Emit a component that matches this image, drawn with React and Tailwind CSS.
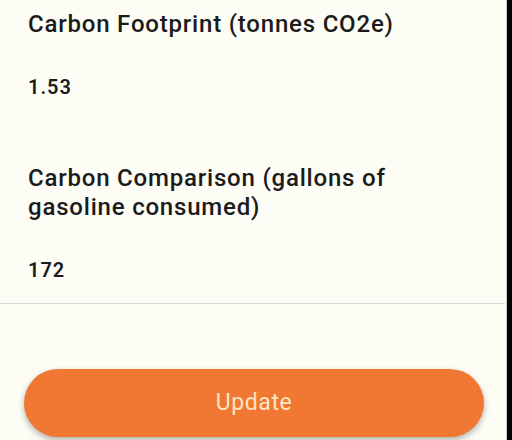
export default function App() {
  return (
    <div className="w-[512px] h-[440px] flex bg-black overflow-hidden" style={{ fontFamily: "Roboto, 'Noto Sans', sans-serif" }}>
      <div className="w-[507px] h-full bg-[#fdfcf5] border-r border-[#cfcfca] flex flex-col">
        <div className="pl-[28px] pt-[10px] text-[#1b1b1b]">
          <div className="w-[440px] text-[24px] leading-[29px] font-medium tracking-[0.8px]">Carbon Footprint (tonnes CO2e)</div>
          <div className="mt-[34px] text-[20px] leading-[28px] font-semibold tracking-[1px]">1.53</div>
          <div className="w-[420px] mt-[63px] text-[24px] leading-[29px] font-medium tracking-[0.8px]">Carbon Comparison (gallons of gasoline consumed)</div>
          <div className="mt-[34px] text-[20px] leading-[28px] font-semibold tracking-[1px]">172</div>
        </div>
        <div className="mt-[19px] h-px bg-[#d9d9d4] mr-[1px]"></div>
        <div className="pl-[24px] pt-[65px]">
          <button className="w-[460px] h-[68px] rounded-full bg-[#f07832] text-[#fde4c2] text-[23px] tracking-[0.6px] shadow-[0_3px_6px_rgba(0,0,0,0.3)]">
            Update
          </button>
        </div>
      </div>
    </div>
  );
}
